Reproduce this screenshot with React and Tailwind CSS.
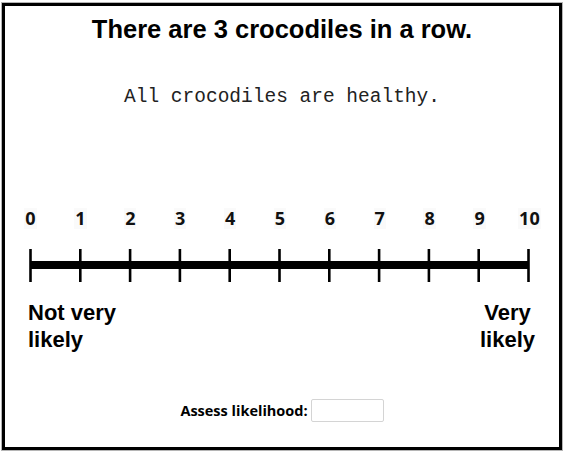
import React from "react";

const ticks = [0, 1, 2, 3, 4, 5, 6, 7, 8, 9, 10];

/* ---------------- SCALE (bar + tick marks) ---------------- */

const ScaleBar = () => (
  <svg width="502" height="33" viewBox="0 0 502 33" className="block">
    <rect x="1.5" y="12" width="498" height="8" fill="#000" />
    {ticks.map((t) => (
      <line
        key={t}
        x1={1.5 + 49.8 * t}
        x2={1.5 + 49.8 * t}
        y1="0"
        y2="33"
        stroke="#000"
        strokeWidth="2.6"
      />
    ))}
  </svg>
);

const App = () => {
  return (
    <div className="w-[566px] h-[454px] bg-white overflow-hidden pt-[3px] pl-[2px]">
      <div className="w-[560px] h-[447px] border-[3px] border-black shadow-[0_0_0_1px_#b5b5b5] flex flex-col">
        {/* question */}
        <h1 className="pt-[9px] text-center text-[25.5px] leading-[29px] font-bold text-black font-['Liberation_Sans',Arial,sans-serif]">
          There are 3 crocodiles in a row.
        </h1>

        <p className="mt-[42px] text-center text-[19.5px] leading-[22px] text-[#222] font-['Liberation_Mono','Courier_New',monospace]">
          All crocodiles are healthy.
        </p>

        {/* numbers 0 - 10 */}
        <div className="mt-[100px] pl-[24px]">
          <div className="w-[502px] flex justify-between font-['Open_Sans',sans-serif] font-bold text-[18px] leading-[21px] text-[#111]">
            {ticks.map((t) => (
              <div key={t} className="w-[3px] flex justify-center">
                <span className="whitespace-nowrap bg-[#fafafa] px-[1px]">{t}</span>
              </div>
            ))}
          </div>
        </div>

        <div className="mt-[20px] pl-[24px]">
          <ScaleBar />
        </div>

        {/* end labels */}
        <div className="mt-[17px] pl-[23px] pr-[24px] flex justify-between font-['Liberation_Sans',Arial,sans-serif] font-bold text-[22px] leading-[27px] text-black">
          <div>
            Not very
            <br />
            likely
          </div>
          <div className="text-center">
            Very
            <br />
            likely
          </div>
        </div>

        {/* answer box */}
        <div className="mt-[46px] flex items-center justify-center gap-[3px]">
          <label className="font-['Open_Sans',sans-serif] font-bold text-[14.5px] text-black">
            Assess likelihood:
          </label>
          <input
            type="text"
            className="w-[73px] h-[23px] border border-[#d4d4d4] rounded-[2px] outline-none px-1"
          />
        </div>
      </div>
    </div>
  );
};

export default App;
